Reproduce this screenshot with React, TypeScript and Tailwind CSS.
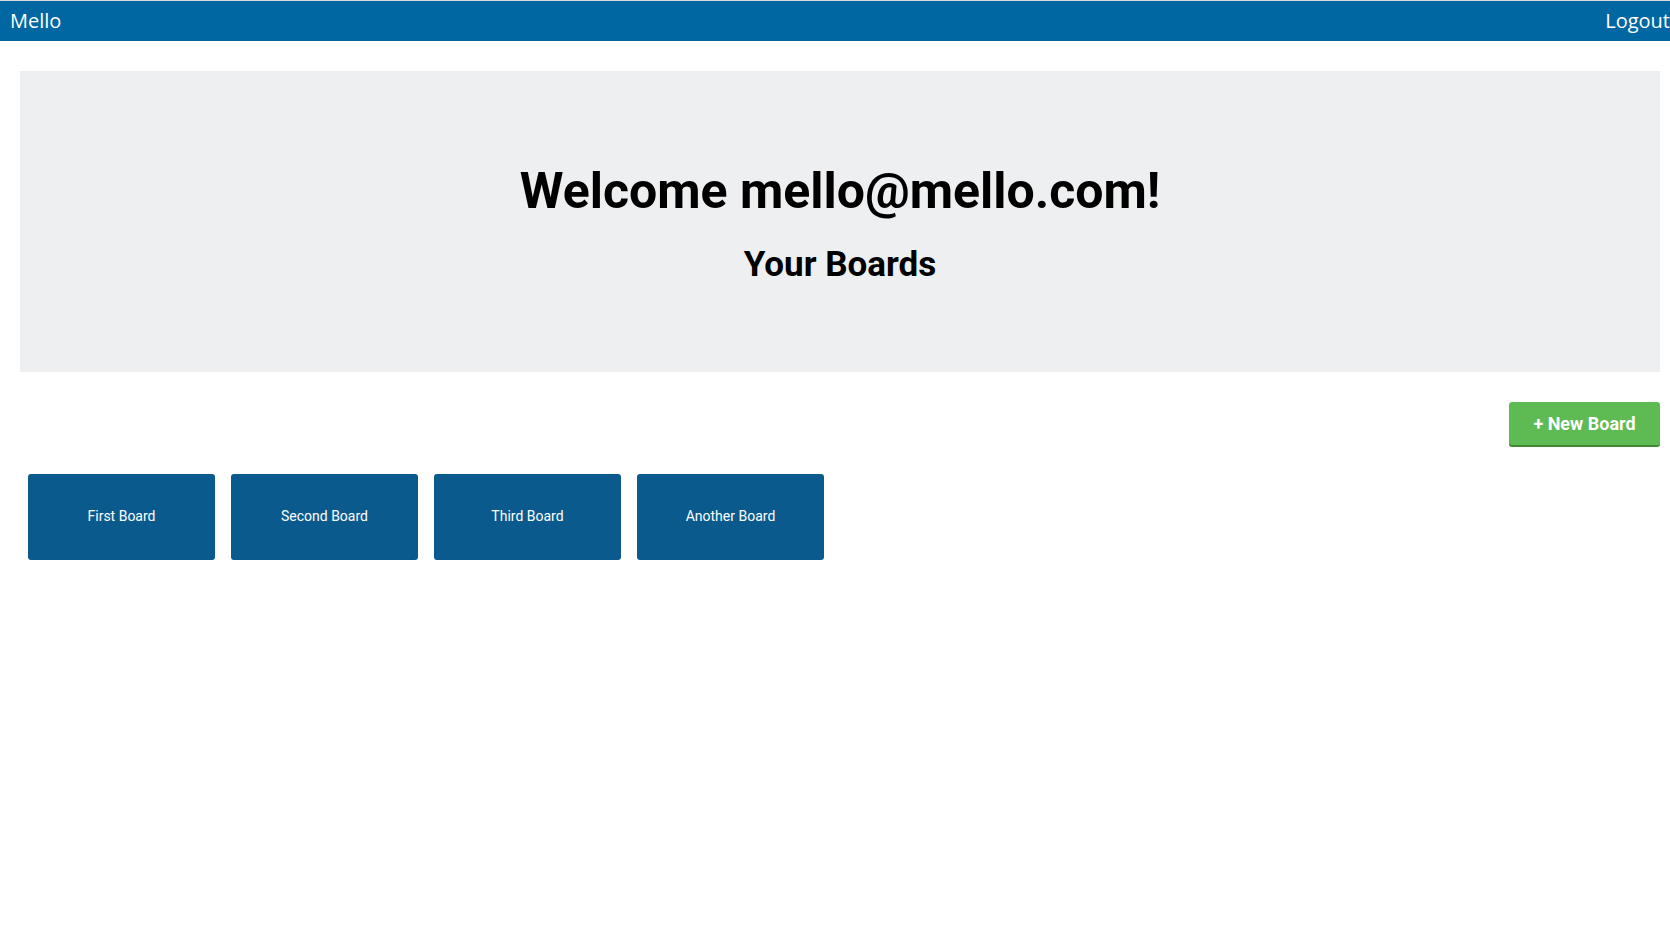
import React from 'react';

const boards = ['First Board', 'Second Board', 'Third Board', 'Another Board'];

export default function App() {
  return (
    <div className="min-h-screen bg-white font-['Roboto',sans-serif]">
      {/* Navbar */}
      <nav className="border-t border-[#d9d9d9] bg-[#0067a2] h-[41px] flex items-center justify-between pl-[10px] font-['Open_Sans',sans-serif] text-white text-[20px]">
        <span>Mello</span>
        <span>Logout</span>
      </nav>

      {/* Jumbotron */}
      <div className="mt-[30px] ml-[20px] mr-[10px] h-[301px] pt-[90px] bg-[#eeeff1] flex flex-col items-center">
        <h1 className="text-[50px] leading-[1.2] font-bold text-black">Welcome mello@mello.com!</h1>
        <h2 className="mt-[23px] text-[35px] leading-[1.2] font-bold text-black">Your Boards</h2>
      </div>

      <div className="flex justify-end mr-[10px] mt-[30px]">
        <button className="w-[151px] h-[45px] rounded-[3px] bg-[#5eba52] border-b-2 border-[#3f8a30] text-white font-bold text-[18px]">
          + New Board
        </button>
      </div>

      {/* Boards */}
      <div className="flex gap-[16px] ml-[28px] mt-[27px]">
        {boards.map((b) => (
          <div
            key={b}
            className="w-[187px] h-[86px] pb-[2px] rounded-[3px] bg-[#0a5a8e] text-white text-[14px] flex items-center justify-center"
          >
            {b}
          </div>
        ))}
      </div>
    </div>
  );
}
